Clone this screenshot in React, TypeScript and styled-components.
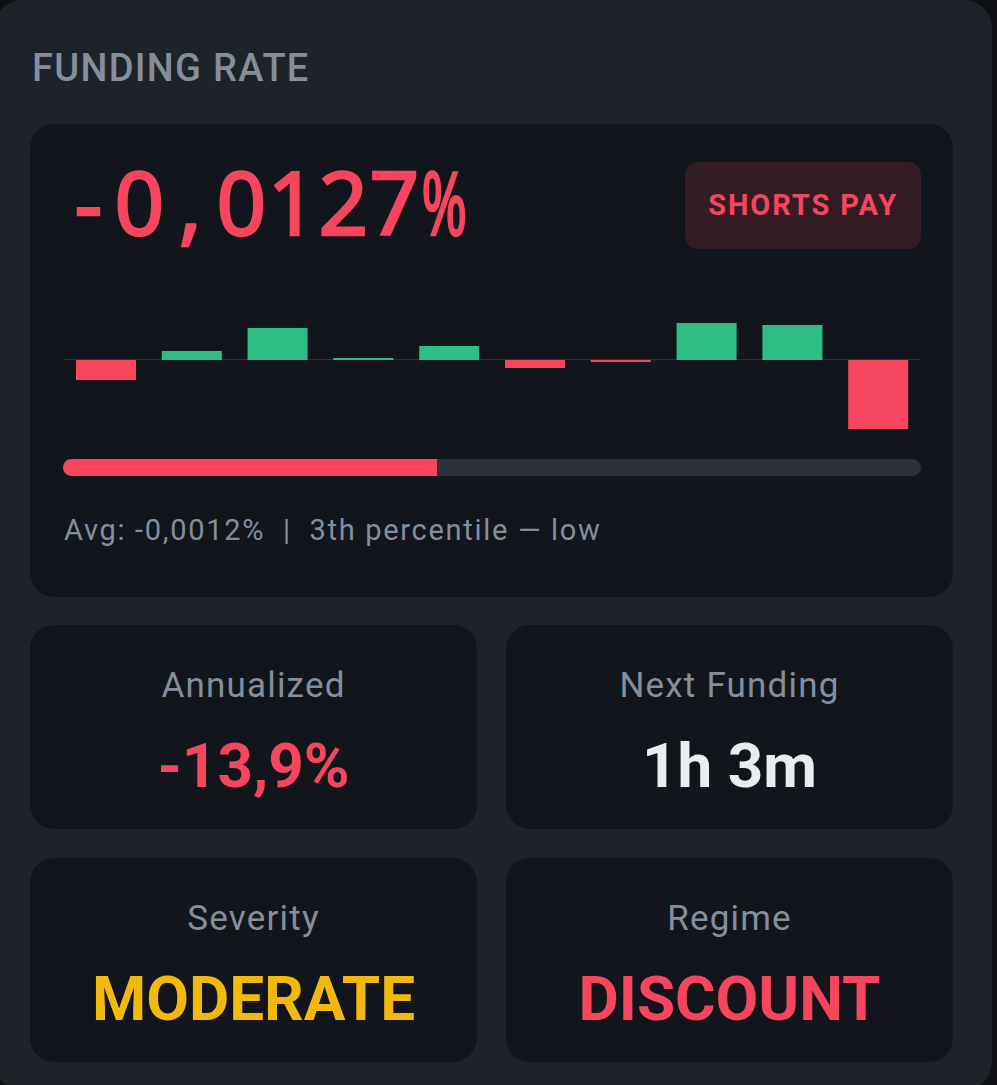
import React from "react";
import styled, { createGlobalStyle } from "styled-components";

const Global = createGlobalStyle`
  html, body {
    margin: 0;
    padding: 0;
    background: #0f1114;
    overflow: hidden;
  }
  * { box-sizing: border-box; }
`;

const Panel = styled.section`
  width: 998px;
  margin-left: -6px;
  background: #1e2329;
  border-radius: 28px;
  padding: 46px 39px 28px 36px;
  display: flex;
  flex-direction: column;
  font-family: Roboto, "Liberation Sans", sans-serif;
`;

const Title = styled.h2`
  margin: 0 0 32px;
  padding-left: 2px;
  font-size: 38px;
  line-height: 45.6px;
  font-weight: 500;
  color: #848e9c;
  letter-spacing: 1.3px;
`;

const RateCard = styled.div`
  background: #12161c;
  border-radius: 24px;
  padding: 38px 32px 49px 33px;
  display: flex;
  flex-direction: column;
`;

const Header = styled.div`
  display: flex;
  justify-content: space-between;
  align-items: flex-start;
  height: 87px;
`;

const BigRate = styled.div`
  display: flex;
  font-family: "Noto Sans", "DejaVu Sans", sans-serif;
  font-size: 87px;
  line-height: 79px;
  font-weight: 400;
  color: #f6465d;
  -webkit-text-stroke: 2.4px #f6465d;
`;

const Cell = styled.span<{ $squeeze?: boolean }>`
  display: inline-block;
  width: 51px;
  text-align: center;
  transform: ${(p) => (p.$squeeze ? "translateX(-8px) scaleX(0.63)" : "none")};
`;

const Badge = styled.div`
  height: 87px;
  padding: 0 23px 0 23px;
  border-radius: 13px;
  background: rgba(246, 70, 93, 0.15);
  color: #f6465d;
  display: flex;
  align-items: center;
  font-size: 29px;
  font-weight: 700;
  letter-spacing: 1.9px;
`;

const Chart = styled.svg`
  display: block;
  margin-top: 41px;
  width: 858px;
  height: 140px;
`;

const Track = styled.div`
  margin-top: 29px;
  height: 17px;
  border-radius: 9px;
  background: #2b3139;
  overflow: hidden;
`;

const Fill = styled.div`
  height: 100%;
  background: #f6465d;
`;

const Footnote = styled.div`
  margin-top: 37px;
  font-size: 29px;
  line-height: 35px;
  letter-spacing: 1.7px;
  color: #848e9c;
  white-space: pre;
  padding-left: 1px;
`;

const StatGrid = styled.div`
  margin-top: 28px;
  display: grid;
  grid-template-columns: 447px 447px;
  column-gap: 29px;
  row-gap: 29px;
`;

const StatCard = styled.div`
  height: 204px;
  background: #12161c;
  border-radius: 24px;
  padding-top: 40px;
  display: flex;
  flex-direction: column;
  align-items: center;
`;

const StatLabel = styled.div`
  font-size: 35px;
  line-height: 42px;
  letter-spacing: 1.2px;
  color: #848e9c;
`;

const StatValue = styled.div<{ $color: string }>`
  margin-top: 22px;
  font-size: 62px;
  line-height: 74px;
  font-weight: 700;
  color: ${(p) => p.$color};
`;

const RED = "#f6465d";
const GREEN = "#2ebd85";

const history = [-0.0037, 0.00166, 0.0059, 0.00037, 0.00258, -0.00147, -0.00037, 0.00681, 0.00644, -0.0127];

function FundingChart() {
  const w = 858;
  const h = 140;
  const mid = 70;
  const slot = w / history.length;
  const barW = 60;
  const maxAbs = Math.max(...history.map((v) => Math.abs(v)));
  const scale = 69 / maxAbs;
  return (
    <Chart viewBox={`0 0 ${w} ${h}`}>
      <line x1={0} x2={w} y1={mid - 0.5} y2={mid - 0.5} stroke="#2b3139" strokeWidth={1} />
      {history.map((v, i) => {
        const bh = Math.max(Math.abs(v) * scale, 2);
        const x = i * slot + 13;
        const y = v >= 0 ? mid - bh : mid;
        return <rect key={i} x={x} y={y} width={barW} height={bh} fill={v >= 0 ? GREEN : RED} />;
      })}
    </Chart>
  );
}

const rate = "-0,0127%";

export default function App() {
  return (
    <>
      <Global />
      <Panel>
        <Title>FUNDING RATE</Title>
        <RateCard>
          <Header>
            <BigRate>
              {rate.split("").map((c, i) => (
                <Cell key={i} $squeeze={c === "%"}>
                  {c}
                </Cell>
              ))}
            </BigRate>
            <Badge>SHORTS PAY</Badge>
          </Header>
          <FundingChart />
          <Track>
            <Fill style={{ width: `${(374 / 858) * 100}%` }} />
          </Track>
          <Footnote>{"Avg: -0,0012%  |  3th percentile — low"}</Footnote>
        </RateCard>
        <StatGrid>
          <StatCard>
            <StatLabel>Annualized</StatLabel>
            <StatValue $color={RED}>-13,9%</StatValue>
          </StatCard>
          <StatCard>
            <StatLabel>Next Funding</StatLabel>
            <StatValue $color="#eaecef">1h 3m</StatValue>
          </StatCard>
          <StatCard>
            <StatLabel>Severity</StatLabel>
            <StatValue $color="#f0b90b">MODERATE</StatValue>
          </StatCard>
          <StatCard>
            <StatLabel>Regime</StatLabel>
            <StatValue $color={RED}>DISCOUNT</StatValue>
          </StatCard>
        </StatGrid>
      </Panel>
    </>
  );
}
